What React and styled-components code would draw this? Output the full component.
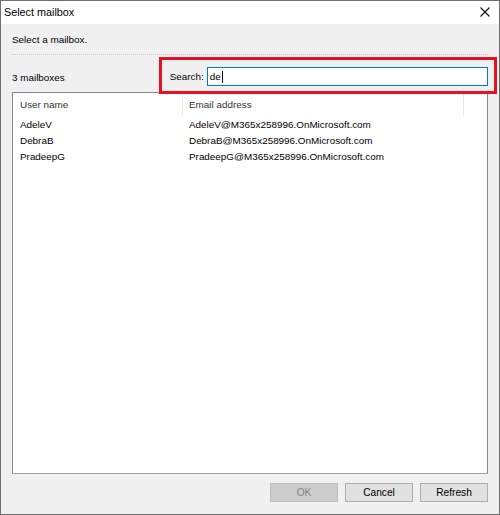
import React from "react";
import styled, { createGlobalStyle } from "styled-components";

const Global = createGlobalStyle`
  html, body { margin: 0; padding: 0; background: #ffffff; }
  body { font-family: "Liberation Sans", Arial, sans-serif; font-size: 9.9px; color: #000; }
  * { box-sizing: border-box; }
`;

const Window = styled.div`
  width: 500px;
  height: 515px;
  border: 1px solid #6e6e6e;
  background: #f0f0f0;
  display: flex;
  flex-direction: column;
`;

const TitleBar = styled.div`
  height: 23px;
  background: #ffffff;
  display: flex;
  align-items: center;
  justify-content: space-between;
  padding: 0 9px 1px 3px;
  flex: none;
`;

const Title = styled.span`
  font-size: 10.8px;
  color: #000;
`;

const Body = styled.div`
  flex: 1;
  display: flex;
  flex-direction: column;
  padding: 9px 11px 12px 11px;
`;

const Intro = styled.div`
  height: 14px;
  line-height: 14px;
`;

const Divider = styled.div`
  margin-top: 7px;
  border-top: 1px dotted #c4c4c4;
  width: 476px;
`;

const SearchRow = styled.div`
  position: relative;
  display: flex;
  align-items: center;
  padding: 12px 0 6px;
  flex: none;
`;

const Count = styled.div`
  width: 158px;
  padding-top: 1px;
`;

const Label = styled.span`
  margin-right: 3px;
`;

const SearchInput = styled.div`
  width: 282px;
  height: 19px;
  background: #fff;
  border: 1px solid #0078d7;
  display: flex;
  align-items: center;
  padding-left: 2px;
`;

const Caret = styled.span`
  display: inline-block;
  width: 1px;
  height: 12px;
  background: #000;
  margin-left: 1px;
`;

const Annotation = styled.div`
  position: absolute;
  top: 2px;
  left: 147px;
  width: 338px;
  height: 37px;
  border: 3px solid #e81123;
  pointer-events: none;
  z-index: 2;
`;

const ListBox = styled.div`
  flex: 1;
  background: #fff;
  border: 1px solid #828790;
  border-bottom-color: #a0a0a0;
  display: flex;
  flex-direction: column;
`;

const Header = styled.div`
  display: grid;
  grid-template-columns: 170px 281px;
  height: 23px;
`;

const HeaderCell = styled.div`
  display: flex;
  align-items: center;
  padding-left: ${(p) => p.$pad}px;
  padding-bottom: 1px;
  border-right: 1px solid #e5e5e5;
  color: #333;
`;

const Row = styled.div`
  display: grid;
  grid-template-columns: 170px 281px;
  height: 16px;
  align-items: center;
`;

const Cell = styled.div`
  padding-left: ${(p) => p.$pad}px;
  white-space: nowrap;
`;

const Footer = styled.div`
  display: flex;
  justify-content: flex-end;
  gap: 7px;
  margin-top: 9px;
`;

const Button = styled.button`
  width: 68px;
  height: 19px;
  font: inherit;
  font-size: 10.2px;
  padding: 0;
  border: 1px solid ${(p) => (p.disabled ? "#bfbfbf" : "#adadad")};
  background: ${(p) => (p.disabled ? "#cccccc" : "#e1e1e1")};
  color: ${(p) => (p.disabled ? "#838383" : "#000")};
`;

const users = [
  ["AdeleV", "AdeleV@M365x258996.OnMicrosoft.com"],
  ["DebraB", "DebraB@M365x258996.OnMicrosoft.com"],
  ["PradeepG", "PradeepG@M365x258996.OnMicrosoft.com"],
];

export default function App() {
  return (
    <>
      <Global />
      <Window>
        <TitleBar>
          <Title>Select mailbox</Title>
          <svg width="10" height="10" viewBox="0 0 10 10">
            <path d="M0.5 0.5 L9.5 9.5 M9.5 0.5 L0.5 9.5" stroke="#111" strokeWidth="1.1" />
          </svg>
        </TitleBar>
        <Body>
          <Intro>Select a mailbox.</Intro>
          <Divider />
          <SearchRow>
            <Count>3 mailboxes</Count>
            <Label>Search:</Label>
            <SearchInput>
              de<Caret />
            </SearchInput>
            <Annotation />
          </SearchRow>
          <ListBox>
            <Header>
              <HeaderCell $pad={7}>User name</HeaderCell>
              <HeaderCell $pad={6}>Email address</HeaderCell>
            </Header>
            {users.map(([u, e]) => (
              <Row key={u}>
                <Cell $pad={7}>{u}</Cell>
                <Cell $pad={6}>{e}</Cell>
              </Row>
            ))}
          </ListBox>
          <Footer>
            <Button disabled>OK</Button>
            <Button>Cancel</Button>
            <Button>Refresh</Button>
          </Footer>
        </Body>
      </Window>
    </>
  );
}
